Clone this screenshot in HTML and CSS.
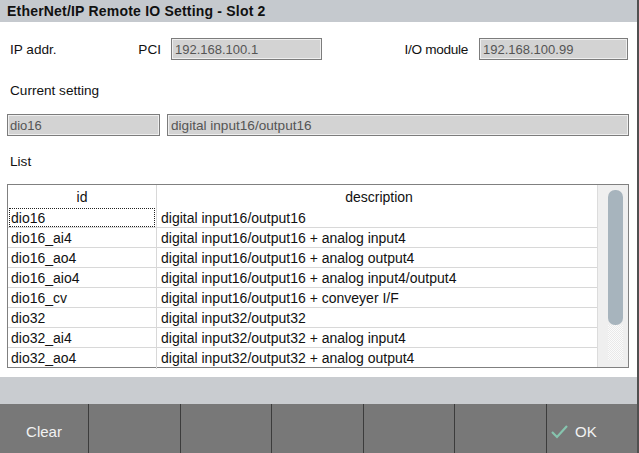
FILE: index.html
```html
<!DOCTYPE html>
<html>
<head>
<meta charset="utf-8">
<link rel="stylesheet" href="styles.css">
</head>
<body>
<div class="app">
  <div class="titlebar">EtherNet/IP Remote IO Setting - Slot 2</div>
  <div class="content">
    <div class="row-addr">
      <div class="cell-labels"><span>IP addr.</span><span>PCI</span></div>
      <div class="field">192.168.100.1</div>
      <div class="cell-io">I/O module</div>
      <div class="field">192.168.100.99</div>
    </div>
    <div class="caption cap-current">Current setting</div>
    <div class="row-current">
      <div class="field f-id">dio16</div>
      <div class="field f-desc">digital input16/output16</div>
    </div>
    <div class="caption cap-list">List</div>
    <div class="list">
      <div class="grid">
        <div class="hrow"><div class="c-id">id</div><div class="c-desc">description</div></div>
        <div class="row"><div class="c-id"><span class="focus">dio16</span></div><div class="c-desc">digital input16/output16</div></div>
        <div class="row"><div class="c-id">dio16_ai4</div><div class="c-desc">digital input16/output16 + analog input4</div></div>
        <div class="row"><div class="c-id">dio16_ao4</div><div class="c-desc">digital input16/output16 + analog output4</div></div>
        <div class="row"><div class="c-id">dio16_aio4</div><div class="c-desc">digital input16/output16 + analog input4/output4</div></div>
        <div class="row"><div class="c-id">dio16_cv</div><div class="c-desc">digital input16/output16 + conveyer I/F</div></div>
        <div class="row"><div class="c-id">dio32</div><div class="c-desc">digital input32/output32</div></div>
        <div class="row"><div class="c-id">dio32_ai4</div><div class="c-desc">digital input32/output32 + analog input4</div></div>
        <div class="row"><div class="c-id">dio32_ao4</div><div class="c-desc">digital input32/output32 + analog output4</div></div>
      </div>
      <div class="scroll">
        <div class="thumb"></div>
        <div class="track-rest"></div>
      </div>
    </div>
  </div>
  <div class="band"></div>
  <div class="buttons">
    <div class="btn">Clear</div>
    <div class="btn"></div>
    <div class="btn"></div>
    <div class="btn"></div>
    <div class="btn"></div>
    <div class="btn"></div>
    <div class="btn btn-ok"><svg class="check" width="17" height="15" viewBox="0 0 17 15"><path d="M1 8 L6 13 L16 2" fill="none" stroke="#86c4ae" stroke-width="2.2"/></svg><span>OK</span></div>
  </div>
</div>
</body>
</html>
```

FILE: styles.css
```css
* { box-sizing: border-box; }
html, body { margin: 0; padding: 0; }
body {
  width: 639px;
  height: 453px;
  overflow: hidden;
  font-family: "Liberation Sans", Arial, sans-serif;
  font-size: 13.6px;
  color: #111;
  background: #fff;
}
.app {
  width: 639px;
  height: 453px;
  display: flex;
  flex-direction: column;
  border-right: 2px solid #505050;
}
.titlebar {
  height: 22px;
  line-height: 22px;
  background: #c5c9ce;
  padding-left: 7px;
  font-weight: bold;
  font-size: 14px;
  letter-spacing: 0.2px;
  color: #111;
}
.content {
  height: 355px;
  background: #fff;
  padding-top: 16px;
}
.row-addr {
  display: grid;
  grid-template-columns: 161px 151px 157px 149px;
  padding-left: 10px;
  height: 22px;
  align-items: center;
}
.cell-labels {
  display: flex;
  justify-content: space-between;
  padding-right: 10px;
  padding-top: 1px;
}
.cell-io {
  text-align: right;
  padding-right: 11px;
  padding-top: 1px;
  letter-spacing: -0.3px;
}
.field {
  height: 22px;
  line-height: 21px;
  background: #d3d3d3;
  border: 1px solid #7c7c7c;
  box-shadow: inset 0 0 0 1px #efefef;
  color: #555;
  font-size: 13px;
  padding-left: 3px;
  white-space: nowrap;
  overflow: hidden;
}
.caption {
  height: 16px;
  line-height: 16px;
  padding-left: 10px;
}
.cap-current { margin-top: 23px; }
.row-current {
  display: flex;
  gap: 7px;
  padding-left: 7px;
  margin-top: 15px;
}
.f-id { width: 153px; padding-left: 2px; }
.f-desc { width: 462px; font-size: 13.6px; }
.cap-list { margin-top: 18px; }
.list {
  margin: 14px 0 0 7px;
  width: 622px;
  height: 184px;
  border: 1px solid #808080;
  display: flex;
  font-size: 14px;
}
.grid {
  width: 590px;
  display: flex;
  flex-direction: column;
  border-right: 1px solid #dcdcdc;
}
.hrow, .row {
  display: grid;
  grid-template-columns: 149px 1fr;
}
.hrow { height: 23px; }
.hrow > div {
  text-align: center;
  line-height: 25px;
}
.row {
  height: 20px;
  line-height: 21px;
  border-bottom: 1px solid #d8d8d8;
}
.row:last-child { border-bottom: none; }
.c-id {
  border-right: 1px solid #d8d8d8;
  padding-left: 3px;
  white-space: nowrap;
}
.hrow .c-id { padding-left: 0; }
.c-desc {
  padding-left: 4px;
  white-space: nowrap;
}
.hrow + .row .c-id { padding-left: 1px; }
.focus {
  display: block;
  height: 19px;
  margin-right: 1px;
  border: 1px dotted #222;
  padding-left: 1px;
  line-height: 19px;
}
.scroll {
  flex: 1;
  background: #efefef;
  padding: 5px 0 0 10px;
}
.thumb {
  width: 15px;
  height: 135px;
  background: #a7b4bd;
  border-radius: 7px;
}
.track-rest {
  width: 15px;
  height: 35px;
  background-color: #f7f7f7;
  background-image: repeating-conic-gradient(#e9e9e9 0 25%, #fbfbfb 0 50%);
  background-size: 2px 2px;
}
.band {
  height: 27px;
  background: #c9ccd0;
}
.buttons {
  flex: 1;
  display: grid;
  grid-template-columns: 88px 92px 91px 92px 91px 92px 1fr;
  background: #787878;
}
.btn {
  display: flex;
  align-items: center;
  justify-content: center;
  color: #f2f2f2;
  font-size: 15px;
  border-left: 1px solid #3c3c3c;
  padding-top: 6px;
}
.btn:first-child { border-left: none; }
.btn-ok {
  justify-content: flex-start;
  padding-left: 4px;
  gap: 7px;
}
.check { display: block; }
```
